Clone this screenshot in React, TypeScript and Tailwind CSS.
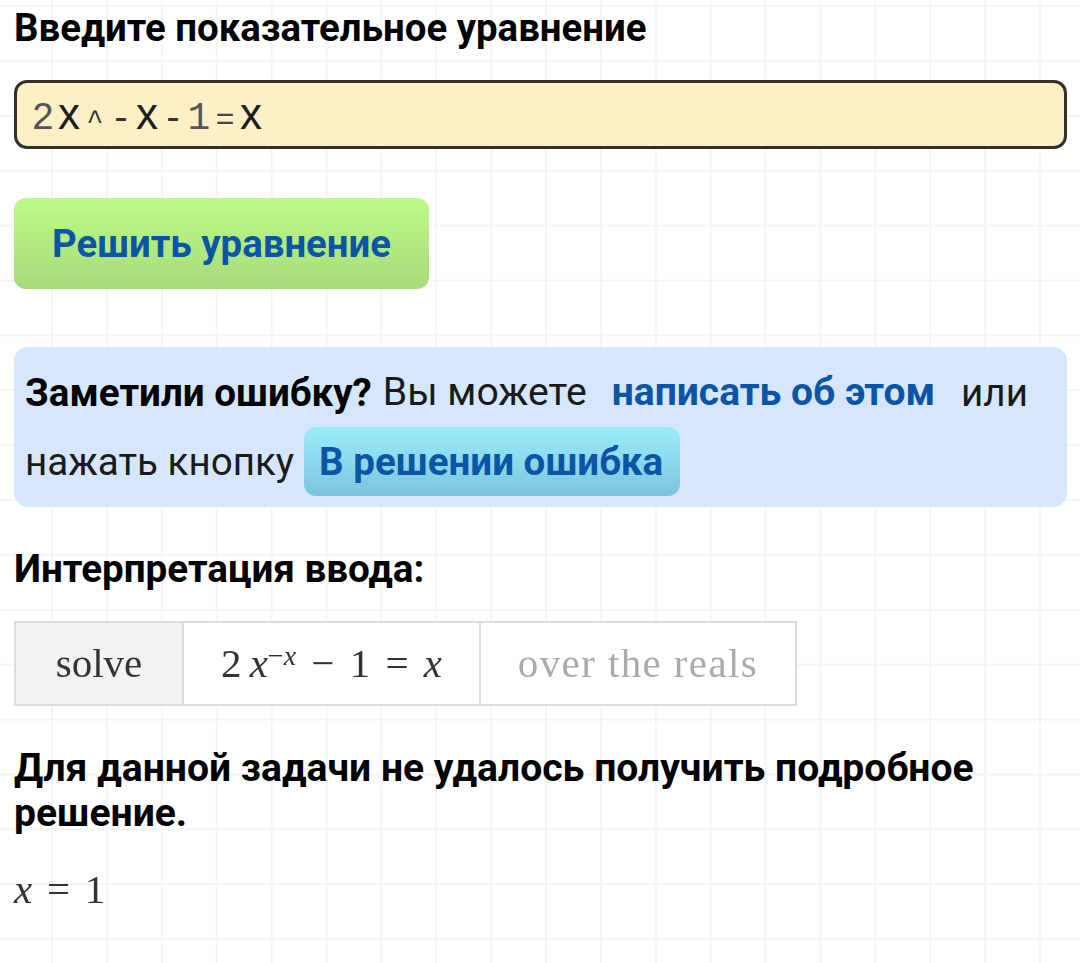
const roboto = { fontFamily: "Roboto, sans-serif" };

// each input glyph sits in a fixed 26px slot, the field looks monospaced
function Slot({ children, cls }: { children: string; cls: string }) {
  return <span className={`flex w-[26px] justify-center leading-none ${cls}`}>{children}</span>;
}

const letter = "font-['Liberation_Sans',sans-serif] text-[44px] text-[#1c1c1c]";
const digit = "font-['Liberation_Mono',monospace] text-[38px] text-[#555]";
const dash = "font-['Liberation_Mono',monospace] text-[36px] text-[#333]";
const caret = "font-['Liberation_Mono',monospace] text-[28px] text-[#333]";
const equals = "font-['Liberation_Mono',monospace] text-[32px] text-[#444]";

export default function App() {
  return (
    <div
      style={roboto}
      className="h-[963px] w-[1080px] overflow-hidden bg-white bg-[linear-gradient(to_right,#f5f5f6_2px,transparent_2px),linear-gradient(to_bottom,#f5f5f6_2px,transparent_2px)] bg-[size:54.9px_54.9px] bg-[position:51px_5px] px-[14px] text-black"
    >
      <h1 className="pt-[5px] text-[38.4px] leading-[45px] font-bold">Введите показательное уравнение</h1>

      <div className="mt-[30px] flex h-[69px] w-[1053px] items-baseline rounded-[13px] border-[3px] border-[#33302a] bg-[#fef0c6] pt-[9px] pl-[13px]">
        <Slot cls={digit}>2</Slot>
        <Slot cls={letter}>x</Slot>
        <Slot cls={caret}>^</Slot>
        <Slot cls={dash}>-</Slot>
        <Slot cls={letter}>x</Slot>
        <Slot cls={dash}>-</Slot>
        <Slot cls={digit}>1</Slot>
        <Slot cls={equals}>=</Slot>
        <Slot cls={letter}>x</Slot>
      </div>

      <button className="mt-[49px] block h-[91px] w-[415px] rounded-[12px] bg-gradient-to-b from-[#bdfb86] to-[#a6da7b] text-[38.4px] font-bold text-[#0b55a6]">
        Решить уравнение
      </button>

      <div className="mt-[58px] h-[160px] w-[1053px] rounded-[14px] bg-[#d5e6fd] px-[11px] text-[38.6px] leading-[69px]">
        <div className="flex h-[80px] items-center pt-[11px] whitespace-pre">
          <b>Заметили ошибку?</b>
          <span className="ml-[11px] text-[39.2px] text-[#1a1a1a]">Вы можете</span>
          <b className="ml-[25px] text-[39px] text-[#0b55a6]">написать об этом</b>
          <span className="ml-[26px] text-[38.6px] text-[#1a1a1a]">или</span>
        </div>
        <div className="flex items-center whitespace-pre">
          <span className="text-[#1a1a1a]">нажать кнопку</span>
          <b className="ml-[10px] flex h-[69px] w-[376px] items-center rounded-[12px] bg-gradient-to-b from-[#9aedfd] to-[#7cc4dc] pl-[15px] text-[#0b55a6]">
            В решении ошибка
          </b>
        </div>
      </div>

      <h2 className="mt-[39px] text-[38.6px] leading-[45px] font-bold">Интерпретация ввода:</h2>

      <div className="mt-[30px] flex h-[85px] w-[783px] border-2 border-[#dcdcdc] bg-white font-['Liberation_Serif',serif] text-[41px] text-[#333] blur-[0.4px]">
        <div className="flex w-[168px] items-center justify-center border-r-2 border-[#dcdcdc] bg-[#f2f2f2]">solve</div>
        <div className="flex w-[297px] items-center justify-center border-r-2 border-[#dcdcdc] [word-spacing:5px]">
          <span>2&thinsp;<i>x</i></span>
          <sup className="relative -top-[8px] text-[28px] leading-none">−<i>x</i></sup>
          <span className="whitespace-pre"> − 1 = <i>x</i></span>
        </div>
        <div className="flex flex-1 items-center justify-center tracking-[1.4px] text-[#aaa]">over the reals</div>
      </div>

      <p className="mt-[40px] w-[1040px] text-[39.1px] leading-[45px] font-bold">
        Для данной задачи не удалось получить подробное решение.
      </p>

      <div className="mt-[31px] font-['Liberation_Serif',serif] text-[41px] leading-[45px] whitespace-pre text-[#333] blur-[0.4px] [word-spacing:4.5px]">
        <i>x</i> = 1
      </div>
    </div>
  );
}
